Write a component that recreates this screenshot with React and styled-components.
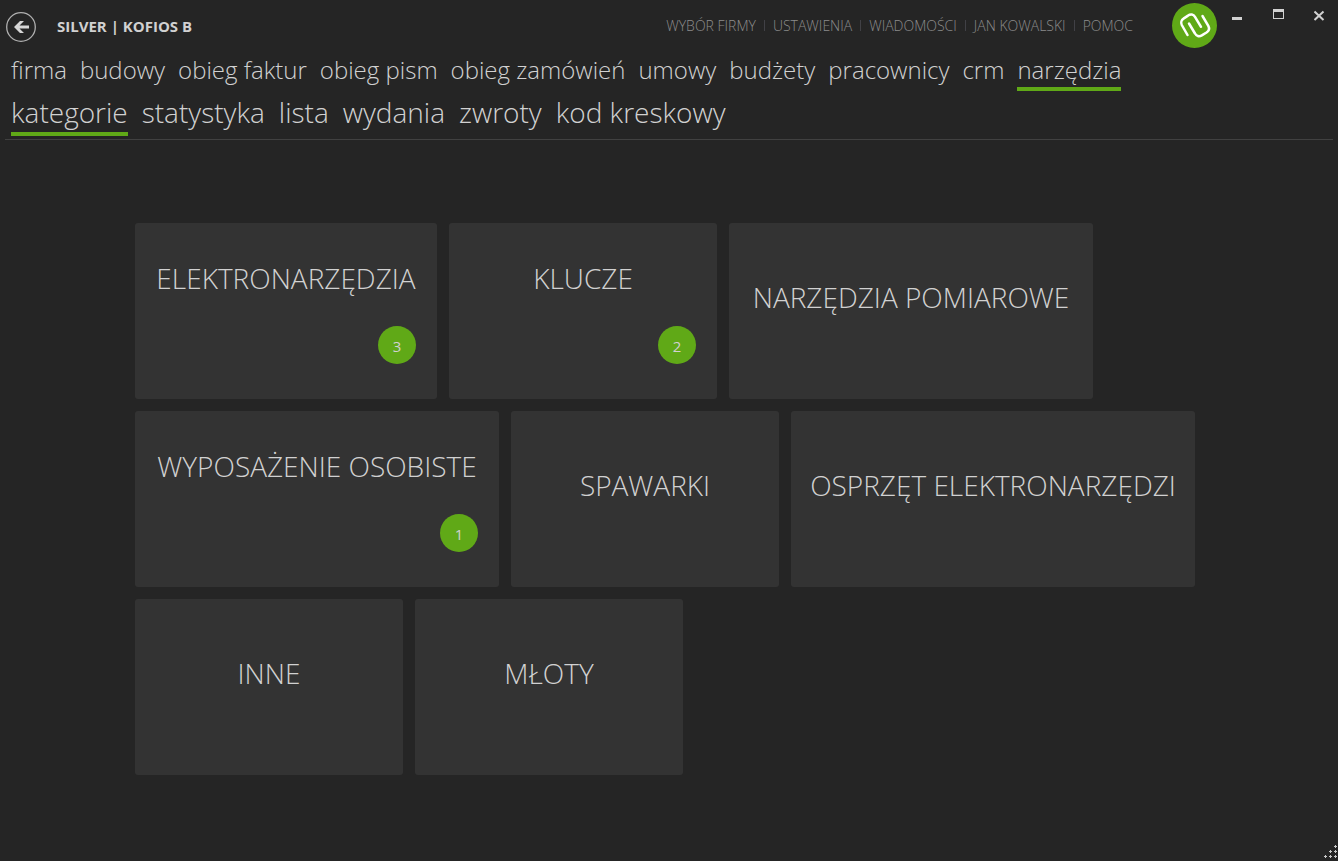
import styled, { createGlobalStyle } from 'styled-components'

const GlobalStyle = createGlobalStyle`
	* {
		box-sizing: border-box;
	}
	body {
		margin: 0;
		background-color: #252525;
		color: #d1d1d1;
		font-family: 'Open Sans', 'Noto Sans', sans-serif;
		font-weight: 300;
	}
	button {
		padding: 0;
		border: none;
		background: none;
		color: inherit;
		font: inherit;
		cursor: pointer;
	}
	a {
		color: inherit;
		text-decoration: none;
	}
	svg {
		display: block;
	}
`

const Window = styled.div`
	display: flex;
	flex-direction: column;
	min-height: 100vh;
`
const TitleBar = styled.header`
	display: flex;
	align-items: center;
	height: 53px;
	padding: 0 6px;
`
const BackButton = styled.button`
	width: 30px;
	height: 30px;
`
const Title = styled.h1`
	flex: 1;
	margin: 0 0 2px 21px;
	font-size: 15px;
	font-weight: 700;
	line-height: 20px;
`
const LinkList = styled.nav`
	display: flex;
	margin: 0 39px 2px 0;
`
const TitleLink = styled.a`
	color: #8c8c8c;
	font-size: 14px;
	line-height: 20px;
	& + &::before {
		content: '';
		display: inline-block;
		width: 1px;
		height: 11px;
		margin: 0 8px;
		background-color: #414146;
	}
`
const Logo = styled.div`
	width: 45px;
	height: 45px;
	margin: 0 15px 2px 0;
`
const WindowButtons = styled.div`
	display: flex;
	align-self: flex-start;
	gap: 30px;
	padding: 9px 7px 0 0;
`
const WindowButton = styled.button`
	width: 11px;
	height: 12px;
`

const Menu = styled.nav`
	display: flex;
	padding: 0 11px;
	gap: 13px;
`
const MenuLink = styled.a`
	border-bottom: 4px solid transparent;
	font-size: 24px;
	line-height: 34px;
	white-space: nowrap;
	&[aria-current] {
		border-color: #60a917;
	}
`
const SubMenu = styled(Menu)`
	gap: 14px;
	margin: 0 5px;
	padding: 4px 6px 3px;
	border-bottom: 1px solid #414141;
`
const SubMenuLink = styled(MenuLink)`
	padding-bottom: 2px;
	font-size: 28px;
	line-height: 35px;
`

const Tiles = styled.main`
	display: flex;
	flex-wrap: wrap;
	gap: 12px;
	padding: 83px 135px;
`
const widths = {
	small: '268px',
	medium: '302px',
	large: '364px',
	huge: '404px',
}
const Tile = styled.button`
	display: flex;
	flex-direction: column;
	align-items: center;
	justify-content: center;
	min-width: ${({ $size }) => widths[$size]};
	height: 176px;
	border-radius: 3px;
	background-color: #333333;
`
const TileName = styled.span`
	font-size: 28px;
	line-height: 40px;
	white-space: nowrap;
	margin-bottom: 28px;
`
const Badge = styled.span`
	align-self: flex-end;
	width: 38px;
	height: 38px;
	margin-right: 21px;
	border-radius: 50%;
	background-color: #60a917;
	font-size: 15px;
	font-weight: 400;
	line-height: 40px;
	text-align: center;
`
const ResizeGrip = styled.svg`
	position: fixed;
	right: 0;
	bottom: 2px;
`

const titleLinks = ['WYBÓR FIRMY', 'USTAWIENIA', 'WIADOMOŚCI', 'JAN KOWALSKI', 'POMOC']
const menu = [
	'firma',
	'budowy',
	'obieg faktur',
	'obieg pism',
	'obieg zamówień',
	'umowy',
	'budżety',
	'pracownicy',
	'crm',
	'narzędzia',
]
const subMenu = ['kategorie', 'statystyka', 'lista', 'wydania', 'zwroty', 'kod kreskowy']
const categories = [
	{ name: 'ELEKTRONARZĘDZIA', size: 'medium', count: 3 },
	{ name: 'KLUCZE', size: 'small', count: 2 },
	{ name: 'NARZĘDZIA POMIAROWE', size: 'large' },
	{ name: 'WYPOSAŻENIE OSOBISTE', size: 'large', count: 1 },
	{ name: 'SPAWARKI', size: 'small' },
	{ name: 'OSPRZĘT ELEKTRONARZĘDZI', size: 'huge' },
	{ name: 'INNE', size: 'small' },
	{ name: 'MŁOTY', size: 'small' },
]
const gripDots = [
	[10, 1],
	[5, 6],
	[10, 6],
	[0, 11],
	[5, 11],
	[10, 11],
]

const App = () => (
	<Window>
		<GlobalStyle />
		<TitleBar>
			<BackButton aria-label="Wstecz">
				<svg width="30" height="30" viewBox="0 0 30 30" fill="none">
					<circle cx="15" cy="15" r="14.3" stroke="#b0b0b0" strokeWidth="1.3" />
					<path d="M8 15 14 9H18L13.5 13.5H23V16.5H13.5L18 21H14Z" fill="#d6d6d6" />
				</svg>
			</BackButton>
			<Title>SILVER | KOFIOS B</Title>
			<LinkList>
				{titleLinks.map((text) => (
					<TitleLink key={text} href="#">
						{text}
					</TitleLink>
				))}
			</LinkList>
			<Logo>
				<svg width="45" height="45" viewBox="0 0 45 45" fill="none">
					<circle cx="22.5" cy="22.5" r="22.5" fill="#60a917" />
					<path
						d="M15.5 32 9.8 22C8.6 19.5 9.5 16.8 11.5 15.6L16 12.6C18.5 10.8 21.5 11.2 23 13.8L29 23.8M17 20.5 23 30.5C24.5 33.2 27 34 29.8 32.4L34.5 29.5C37 27.8 37.6 25.2 36.3 22.8L30.5 13"
						stroke="#fff"
						strokeWidth="2.5"
						strokeLinecap="round"
					/>
				</svg>
			</Logo>
			<WindowButtons>
				<WindowButton aria-label="Minimalizuj">
					<svg width="11" height="12">
						<path d="M0 8H10V11H0Z" fill="#d1d1d1" />
					</svg>
				</WindowButton>
				<WindowButton aria-label="Maksymalizuj">
					<svg width="11" height="12">
						<path d="M0 0H11V10H0ZM1 3V9H10V3Z" fill="#d1d1d1" fillRule="evenodd" />
					</svg>
				</WindowButton>
				<WindowButton aria-label="Zamknij">
					<svg width="11" height="12">
						<path d="M0.5 2.5 9.5 11M9.5 2.5 0.5 11" stroke="#d1d1d1" strokeWidth="2" />
					</svg>
				</WindowButton>
			</WindowButtons>
		</TitleBar>
		<Menu>
			{menu.map((text) => (
				<MenuLink key={text} href="#" aria-current={text === 'narzędzia' ? 'page' : undefined}>
					{text}
				</MenuLink>
			))}
		</Menu>
		<SubMenu>
			{subMenu.map((text) => (
				<SubMenuLink key={text} href="#" aria-current={text === 'kategorie' ? 'page' : undefined}>
					{text}
				</SubMenuLink>
			))}
		</SubMenu>
		<Tiles>
			{categories.map(({ name, size, count }) => (
				<Tile key={name} $size={size}>
					<TileName>{name}</TileName>
					{count && <Badge>{count}</Badge>}
				</Tile>
			))}
		</Tiles>
		<ResizeGrip width="14" height="14" fill="#c8c8c8">
			{gripDots.map(([x, y]) => (
				<path key={`${x}-${y}`} d={`M${x + 1} ${y - 1}h1v1h1v1h-1v1h-1v-1h-1v-1h1z`} />
			))}
		</ResizeGrip>
	</Window>
)

export default App
